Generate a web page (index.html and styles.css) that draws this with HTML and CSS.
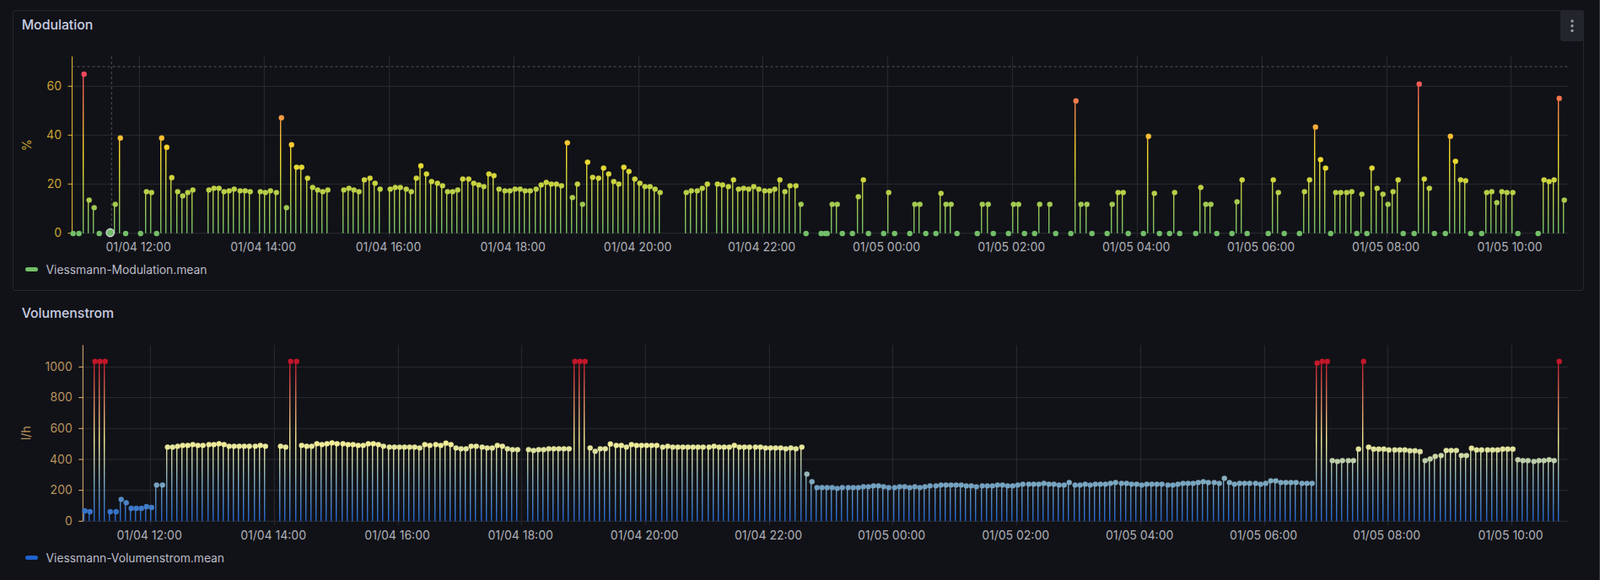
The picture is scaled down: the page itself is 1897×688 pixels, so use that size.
FILE: index.html
```html
<!DOCTYPE html>
<html lang="en">
<head>
  <meta charset="UTF-8">
  <title>Viessmann</title>
  <link rel="stylesheet" href="styles.css">
</head>
<body>
  <div class="dashboard">
    <section class="panel panel-active">
      <header class="panel-head">
        <h2>Modulation</h2>
        <button class="panel-menu" aria-label="Menu">
          <svg width="6" height="18" viewBox="0 0 6 18"><circle cx="3" cy="3" r="1.7"/><circle cx="3" cy="8.8" r="1.7"/><circle cx="3" cy="14.4" r="1.7"/></svg>
        </button>
      </header>
      <svg id="chart-modulation" class="chart" viewBox="16 53 1861 252"></svg>
      <div class="legend"><span class="legend-line legend-green"></span>Viessmann-Modulation.mean</div>
    </section>

    <section class="panel">
      <header class="panel-head">
        <h2>Volumenstrom</h2>
      </header>
      <svg id="chart-volumen" class="chart" viewBox="16 395 1861 252"></svg>
      <div class="legend"><span class="legend-line legend-blue"></span>Viessmann-Volumenstrom.mean</div>
    </section>
  </div>
  <script src="chart.js"></script>
</body>
</html>
```

FILE: styles.css
```css
* {
  box-sizing: border-box;
}

html, body {
  height: 100%;
}

body {
  margin: 0;
  background: #111217;
  border-right: 1px solid #38393d;
  font-family: Inter, "Noto Sans", sans-serif;
  color: #ccccdc;
  overflow: hidden;
}

.dashboard {
  display: flex;
  flex-direction: column;
  gap: 9px;
  padding: 12px 18px 0 15px;
}

.panel {
  position: relative;
  height: 333px;
  border: 1px solid transparent;
  border-radius: 3px;
}

.panel-active {
  border-color: #26272d;
}

.panel-head {
  height: 40px;
  padding-left: 9.7px;
}

.panel-head h2 {
  margin: 0;
  font-size: 15.8px;
  font-weight: 500;
  line-height: 33px;
  color: #c8cde2;
}

.panel-menu {
  position: absolute;
  top: -1px;
  right: -1px;
  width: 28px;
  height: 37px;
  padding: 0;
  border: none;
  border-radius: 3px;
  background: #22252b;
}

.panel-menu svg {
  display: block;
  margin: 0 auto;
  fill: #9a9ca3;
}

.chart {
  display: block;
  width: 1861px;
  height: 252px;
}

.chart text {
  font-size: 14px;
  fill: #aeb0b8;
}

.legend {
  display: flex;
  align-items: center;
  gap: 9.6px;
  height: 29px;
  padding-left: 14.3px;
  font-size: 13.8px;
  color: #bcbdc8;
}

.legend-line {
  width: 14.7px;
  height: 4.5px;
  border-radius: 3px;
}

.legend-green {
  background: #73bf69;
}

.legend-blue {
  background: #1f62cc;
}
```

FILE: chart.js
```js
// Dots traced off the screen in 3x pixels: [x, y], with the origin of each crop
function trace(ox, oy, pts) {
  return pts.map(p => [ox + p[0] / 3, oy + p[1] / 3]);
}

const modulation = [].concat(
  trace(0, 0, [[260,831],[281,831],[299,264],[317,712],[335,739],[353,831],[410,727],[428,491],[447,831],[500,831],[521,682],[539,685],[557,831],[575,491],[593,524],[611,632],[632,682],[650,697],[668,685],[686,676],[743,676],[761,670],[779,670],[797,682],[815,679],[833,673],[854,679],[872,679],[890,682],[926,682],[944,685],[962,679],[983,685],[1001,419],[1019,739],[1037,515],[1055,595],[1073,595],[1094,634],[1112,667],[1130,676],[1148,682],[1166,676],[1223,676],[1241,670],[1259,676],[1277,682],[1296,640],[1316,634],[1334,652],[1352,673],[1388,673],[1406,667],[1424,667],[1445,673],[1463,682],[1481,634],[1497,590]]),
  trace(500, 50, [[17,469],[35,496],[56,502],[74,511],[92,532],[110,532],[128,526],[146,487],[167,487],[185,502],[203,508],[221,514],[239,469],[257,475],[275,523],[296,529],[314,529],[332,523],[350,523],[368,529],[386,529],[407,523],[425,508],[443,499],[461,505],[479,505],[497,511],[518,358],[536,553],[554,505],[572,577],[590,427],[608,481],[629,484],[647,448],[665,469],[683,496],[701,505],[719,445],[737,460],[758,487],[776,502],[794,514],[812,514],[830,523],[848,535],[941,535],[959,529],[980,529],[998,520],[1016,505],[1052,505],[1070,508],[1091,514],[1109,490],[1127,523],[1145,520],[1163,523],[1181,514],[1199,523],[1220,529],[1238,529],[1256,523],[1274,490],[1292,532],[1310,511],[1331,511],[1349,577],[1367,681],[1421,681],[1436,681],[1442,681],[1460,577],[1478,577],[1496,681]]),
  trace(1000, 50, [[32,681],[53,550],[71,490],[89,681],[143,681],[161,535],[182,681],[236,681],[254,577],[272,577],[293,681],[329,681],[347,538],[365,577],[383,577],[404,681],[476,681],[494,577],[515,577],[533,681],[587,681],[605,577],[623,577],[644,681],[680,681],[698,577],[734,577],[755,681],[809,681],[827,209],[845,577],[866,577],[884,681],[938,681],[956,577],[977,535],[995,535],[1013,681],[1067,681],[1085,335],[1106,538],[1124,681],[1160,681],[1178,535],[1196,681]]),
  trace(1400, 0, [[53,831],[71,667],[89,727],[107,727],[128,831],[182,831],[200,718],[218,640],[236,831],[311,831],[329,640],[347,685],[368,831],[422,831],[440,682],[458,640],[479,452],[497,568],[515,598],[533,831],[551,685],[569,685],[590,685],[608,682],[626,831],[644,691],[662,831],[680,598],[698,670],[719,691],[737,727],[755,682],[773,640],[791,831],[830,831],[848,299],[866,637],[884,670],[902,831],[941,831],[959,485],[977,574],[995,640],[1013,643],[1031,831],[1070,831],[1088,685],[1106,682],[1124,721],[1142,682],[1160,685],[1181,685],[1199,831],[1271,831],[1292,640],[1310,646],[1328,640],[1346,350],[1364,712]])
);

const volumen = [].concat(
  trace(0, 345, [[302,783],[320,786],[338,251],[356,251],[374,251],[392,786],[413,786],[431,742],[449,754],[467,774],[485,774],[503,774],[521,768],[539,771],[557,691],[578,691],[596,556],[614,556],[632,553],[650,550],[668,550],[686,547],[704,550],[722,550],[743,547],[761,547],[779,544],[797,547],[815,553],[833,553],[851,553],[869,553],[887,553],[908,553],[926,550],[944,553],[998,553],[1016,556],[1034,251],[1055,251],[1073,550],[1091,553],[1109,553],[1127,544],[1145,547],[1163,544],[1181,541],[1199,544],[1220,544],[1238,547],[1256,547],[1274,550],[1292,550],[1310,544],[1328,544],[1346,547],[1364,553],[1385,556],[1403,556],[1421,556],[1439,556],[1457,556],[1475,556],[1493,559]]),
  trace(500, 410, [[11,352],[29,355],[50,352],[68,355],[86,347],[104,352],[122,364],[140,367],[158,367],[176,358],[194,358],[215,361],[233,364],[251,364],[269,355],[287,358],[305,367],[323,370],[341,370],[380,370],[398,373],[416,370],[434,370],[452,367],[470,367],[488,367],[506,367],[524,367],[545,56],[563,56],[581,56],[599,364],[617,376],[635,367],[653,367],[671,350],[692,355],[710,355],[728,361],[746,352],[764,355],[782,355],[800,355],[818,355],[836,355],[857,361],[875,358],[893,361],[911,361],[929,361],[947,361],[965,361],[983,361],[1001,361],[1022,361],[1040,358],[1058,361],[1076,361],[1094,361],[1112,355],[1130,361],[1148,361],[1166,361],[1187,361],[1205,361],[1223,364],[1241,364],[1259,364],[1277,364],[1295,367],[1313,364],[1331,367],[1352,361],[1370,457],[1388,484],[1406,505],[1424,505],[1442,505],[1460,505],[1478,508],[1496,505]]),
  trace(1000, 410, [[17,505],[35,505],[53,505],[71,502],[89,502],[107,499],[125,499],[143,502],[161,505],[182,505],[200,502],[218,502],[236,505],[254,502],[272,505],[290,502],[308,499],[329,499],[347,496],[365,496],[383,496],[401,496],[419,496],[437,499],[455,499],[473,502],[494,499],[512,499],[530,499],[548,496],[566,496],[584,499],[602,499],[620,496],[638,493],[659,493],[677,493],[695,493],[713,490],[731,493],[749,493],[767,496],[785,496],[803,487],[824,496],[842,496],[860,493],[878,496],[896,493],[914,493],[932,493],[950,490],[968,487],[989,490],[1007,490],[1025,493],[1043,493],[1061,496],[1079,493],[1097,493],[1115,493],[1133,493],[1154,496],[1172,496],[1190,493],[1208,490],[1226,490],[1244,490],[1262,487],[1280,484],[1298,487],[1319,487],[1337,490]]),
  trace(1400, 345, [[155,667],[173,682],[191,688],[209,685],[227,685],[245,685],[266,685],[284,688],[302,685],[320,676],[338,676],[356,682],[374,682],[392,682],[410,682],[431,685],[449,685],[467,685],[485,257],[503,251],[521,251],[539,604],[557,607],[575,604],[596,604],[614,604],[632,563],[650,251],[668,556],[686,563],[704,563],[722,563],[740,566],[761,566],[779,566],[797,566],[815,569],[833,569],[851,572],[869,604],[887,598],[905,589],[926,586],[944,568],[962,568],[980,568],[998,586],[1016,586],[1034,560],[1052,566],[1070,566],[1091,566],[1109,566],[1127,566],[1145,563],[1163,563],[1181,563],[1199,601],[1217,604],[1235,604],[1256,607],[1274,604],[1292,604],[1310,601],[1328,604],[1346,251]])
);

const hours = ["01/04 12:00", "01/04 14:00", "01/04 16:00", "01/04 18:00", "01/04 20:00", "01/04 22:00",
  "01/05 00:00", "01/05 02:00", "01/05 04:00", "01/05 06:00", "01/05 08:00", "01/05 10:00"];

const NS = "http://www.w3.org/2000/svg";
const GRID = "#2a2c31";

function el(parent, name, attrs, text) {
  const node = document.createElementNS(NS, name);
  for (const key in attrs) node.setAttribute(key, attrs[key]);
  if (text !== undefined) node.textContent = text;
  parent.appendChild(node);
  return node;
}

function mix(stops, t) {
  const pos = Math.min(Math.max(t, 0), 1) * (stops.length - 1);
  const i = Math.min(Math.floor(pos), stops.length - 2);
  const f = pos - i;
  const c = [0, 1, 2].map(k => Math.round(stops[i][k] + (stops[i + 1][k] - stops[i][k]) * f));
  return "rgb(" + c.join(",") + ")";
}

function drawChart(svg, o) {
  const defs = el(svg, "defs", {});
  const grad = el(defs, "linearGradient", {
    id: svg.id + "-grad", gradientUnits: "userSpaceOnUse", x1: 0, x2: 0, y1: o.base, y2: o.peak
  });
  o.stops.forEach((s, i) => {
    el(grad, "stop", { offset: i / (o.stops.length - 1), "stop-color": mix([s, s], 0) });
  });

  // grid
  o.yTicks.forEach(t => {
    el(svg, "line", { x1: o.axisX, x2: o.right, y1: t[1], y2: t[1], stroke: GRID });
    el(svg, "line", { x1: o.axisX - 5, x2: o.axisX, y1: t[1], y2: t[1], stroke: o.axisColor });
    el(svg, "text", { x: o.axisX - 12.5, y: t[1] - 0.8, "text-anchor": "end", "dominant-baseline": "central", style: "fill:" + o.labelColor }, t[0]);
  });
  o.xTicks.forEach((x, i) => {
    el(svg, "line", { x1: x, x2: x, y1: o.top, y2: o.base + 5, stroke: GRID });
    el(svg, "text", { x: x - 1.2, y: o.base + 16, "text-anchor": "middle", "dominant-baseline": "central" }, hours[i]);
  });
  el(svg, "line", { x1: o.axisX, x2: o.axisX, y1: o.top, y2: o.base, stroke: o.axisColor });
  el(svg, "text", {
    x: 31, y: o.unitY, "text-anchor": "middle", "dominant-baseline": "central",
    transform: "rotate(-90 31 " + o.unitY + ")", style: "fill:" + o.labelColor
  }, o.unit);

  // threshold + crosshair
  if (o.threshold) {
    el(svg, "line", { x1: o.axisX, x2: o.right, y1: o.threshold, y2: o.threshold, stroke: "#54565c", "stroke-dasharray": "3 3" });
  }
  if (o.hover) {
    el(svg, "line", { x1: o.hover[0] + 1.6, x2: o.hover[0] + 1.6, y1: o.top, y2: o.base, stroke: "#54565c", "stroke-dasharray": "3 3" });
  }

  // stems and dots
  o.points.forEach(p => {
    if (o.base - p[1] > 3) {
      el(svg, "line", { x1: p[0] - 1, x2: p[0] - 1, y1: p[1], y2: o.base, stroke: "url(#" + grad.id + ")", "stroke-width": 1.4 });
    }
  });
  o.points.forEach(p => {
    el(svg, "circle", { cx: p[0], cy: p[1], r: 3.2, fill: mix(o.stops, (o.base - p[1]) / (o.base - o.peak)) });
  });
  if (o.hover) {
    el(svg, "circle", { cx: o.hover[0], cy: o.hover[1], r: 4.6, fill: mix(o.stops, 0), stroke: "#c8c9d2", "stroke-width": 1.6 });
  }
}

drawChart(document.getElementById("chart-modulation"), {
  points: modulation,
  stops: [[115, 191, 105], [250, 222, 42], [242, 73, 92]],
  base: 276.7, peak: 88, top: 67, right: 1859, axisX: 85.5,
  axisColor: "#e6bb3a", labelColor: "#c8a233",
  yTicks: [["0", 276.7], ["20", 218.3], ["40", 160.3], ["60", 102.3]],
  xTicks: [165.3, 313.3, 461.7, 609.3, 757.3, 904.3, 1052.3, 1200.3, 1348.3, 1496.3, 1644.3, 1791.3],
  unit: "%", unitY: 172,
  threshold: 79,
  hover: [130.7, 276]
});

drawChart(document.getElementById("chart-volumen"), {
  points: volumen,
  stops: [[31, 98, 205], [127, 170, 191], [249, 241, 150], [222, 131, 96], [196, 22, 42]],
  base: 618.3, peak: 428.7, top: 409.3, right: 1859, axisX: 98.3,
  axisColor: "#e8b878", labelColor: "#b8915f",
  yTicks: [["0", 618.3], ["200", 581.6], ["400", 545], ["600", 508.3], ["800", 471.6], ["1000", 435.3]],
  xTicks: [178.3, 325.3, 472.3, 618.3, 765.3, 912.3, 1058.3, 1205.3, 1352.3, 1499.3, 1645.3, 1792.3],
  unit: "l/h", unitY: 513.7
});
```
